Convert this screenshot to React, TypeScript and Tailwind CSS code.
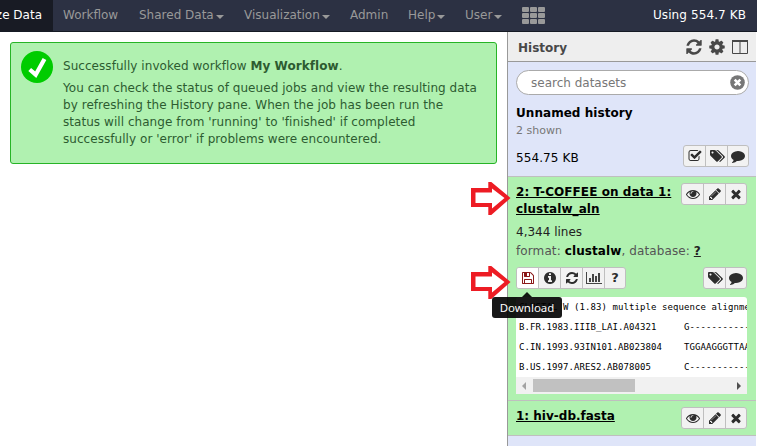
import type { ReactNode } from "react";

const PATHS = {
  eye: "M1664 960q-152-236-381-353 61 104 61 225 0 185-131.5 316.5t-316.5 131.5-316.5-131.5-131.5-316.5q0-121 61-225-229 117-381 353 133 205 333.5 326.5t434.5 121.5 434.5-121.5 333.5-326.5zm-720-384q0-20-14-34t-34-14q-125 0-214.5 89.5t-89.5 214.5q0 20 14 34t34 14 34-14 14-34q0-86 61-147t147-61q20 0 34-14t14-34zm848 384q0 34-20 69-140 230-376.5 368.5t-499.5 138.5-499.5-139-376.5-368q-20-35-20-69t20-69q140-229 376.5-368t499.5-139 499.5 139 376.5 368q20 35 20 69z",
  pencil: "M491 1536l91-91-235-235-91 91v107h128v128h107zm523-928q0-22-22-22-10 0-17 7l-542 542q-7 7-7 17 0 22 22 22 10 0 17-7l542-542q7-7 7-17zm-54-192l416 416-832 832h-416v-416zm683 96q0 53-37 90l-166 166-416-416 166-165q36-38 90-38 53 0 91 38l235 234q37 39 37 91z",
  times: "M1490 1322q0 40-28 68l-136 136q-28 28-68 28t-68-28l-294-294-294 294q-28 28-68 28t-68-28l-136-136q-28-28-28-68t28-68l294-294-294-294q-28-28-28-68t28-68l136-136q28-28 68-28t68 28l294 294 294-294q28-28 68-28t68 28l136 136q28 28 28 68t-28 68l-294 294 294 294q28 28 28 68z",
  refresh: "M1639 1056q0 5-1 7-64 268-268 434.5t-478 166.5q-146 0-282.5-55t-243.5-157l-129 129q-19 19-45 19t-45-19-19-45v-448q0-26 19-45t45-19h448q26 0 45 19t19 45-19 45l-137 137q71 66 161 102t187 36q134 0 250-65t186-179q11-17 53-117 8-23 30-23h192q13 0 22.5 9.5t9.5 22.5zm25-800v448q0 26-19 45t-45 19h-448q-26 0-45-19t-19-45 19-45l138-138q-148-137-349-137-134 0-250 65t-186 179q-11 17-53 117-8 23-30 23h-199q-13 0-22.5-9.5t-9.5-22.5v-7q65-268 270-434.5t480-166.5q146 0 284 55.5t245 156.5l130-129q19-19 45-19t45 19 19 45z",
  cog: "M1152 896q0-106-75-181t-181-75-181 75-75 181 75 181 181 75 181-75 75-181zm512-109v222q0 12-8 23t-20 13l-185 28q-19 54-39 91 35 50 107 138 10 12 10 25t-9 23q-27 37-99 108t-94 71q-12 0-26-9l-138-108q-44 23-91 38-16 136-29 186-7 28-36 28h-222q-14 0-24.5-8.5t-11.5-21.5l-28-184q-49-16-90-37l-141 107q-10 9-25 9-14 0-25-11-126-114-165-168-7-10-7-23 0-12 8-23 15-21 51-66.5t54-70.5q-27-50-41-99l-183-27q-13-2-21-12.5t-8-23.5v-222q0-12 8-23t19-13l186-28q14-46 39-92-40-57-107-138-10-12-10-24 0-10 9-23 26-36 98.5-107.5t94.5-71.5q13 0 26 10l138 107q44-23 91-38 16-136 29-186 7-28 36-28h222q14 0 24.5 8.5t11.5 21.5l28 184q49 16 90 37l142-107q9-9 24-9 13 0 25 10 129 119 165 170 7 8 7 22 0 12-8 23-15 21-51 66.5t-54 70.5q26 50 41 98l183 28q13 2 21 12.5t8 23.5z",
  comment: "M1792 896q0 174-120 321.5t-326 233-450 85.5q-70 0-145-8-198 175-460 242-49 14-114 22-17 2-30.5-9t-17.5-29v-1q-3-4-.5-12t2-10 4.5-9.5l6-9 7-8.5 8-9q7-8 31-34.5t34.5-38 31-39.5 32.5-51 27-59 26-76q-157-89-247.5-220t-90.5-281q0-130 71-248.5t191-204.5 286-136.5 348-50.5q244 0 450 85.5t326 233 120 321.5z",
  info: "M1152 1376v-160q0-14-9-23t-23-9h-96v-512q0-14-9-23t-23-9h-320q-14 0-23 9t-9 23v160q0 14 9 23t23 9h96v320h-96q-14 0-23 9t-9 23v160q0 14 9 23t23 9h448q14 0 23-9t9-23zm-128-896v-160q0-14-9-23t-23-9h-192q-14 0-23 9t-9 23v160q0 14 9 23t23 9h192q14 0 23-9t9-23zm640 416q0 209-103 385.5t-279.5 279.5-385.5 103-385.5-103-279.5-279.5-103-385.5 103-385.5 279.5-279.5 385.5-103 385.5 103 279.5 279.5 103 385.5z",
  tags: "M576 448q0-53-37.5-90.5t-90.5-37.5-90.5 37.5-37.5 90.5 37.5 90.5 90.5 37.5 90.5-37.5 37.5-90.5zm1067 576q0 53-37 90l-491 492q-39 37-91 37-53 0-90-37l-715-716q-38-37-64.5-101t-26.5-117v-416q0-52 38-90t90-38h416q53 0 117 26.5t102 64.5l715 714q37 39 37 91zm384 0q0 53-37 90l-491 492q-39 37-91 37-36 0-59-14t-53-45l470-470q37-37 37-90 0-52-37-91l-715-714q-38-38-102-64.5t-117-26.5h224q53 0 117 26.5t102 64.5l715 714q37 39 37 91z",
  save: "M512 1536h768v-384h-768v384zm896 0h128v-896q0-14-10-38.5t-20-34.5l-281-281q-10-10-34-20t-39-10v416q0 40-28 68t-68 28h-576q-40 0-68-28t-28-68v-416h-128v1280h128v-416q0-40 28-68t68-28h832q40 0 68 28t28 68v416zm-384-928v-320q0-13-9.5-22.5t-22.5-9.5h-192q-13 0-22.5 9.5t-9.5 22.5v320q0 13 9.5 22.5t22.5 9.5h192q13 0 22.5-9.5t9.5-22.5zm640 32v928q0 40-28 68t-68 28h-1344q-40 0-68-28t-28-68v-1344q0-40 28-68t68-28h928q40 0 88 20t76 48l280 280q28 28 48 76t20 88z",
  chart: "M640 896v512h-256v-512h256zm384-512v1024h-256v-1024h256zm1024 1152v128h-2048v-1536h128v1408h1920zm-640-896v768h-256v-768h256zm384-384v1152h-256v-1152h256z",
  check: "M1472 930v318q0 119-84.5 203.5t-203.5 84.5h-832q-119 0-203.5-84.5t-84.5-203.5v-832q0-119 84.5-203.5t203.5-84.5h832q63 0 117 25 15 7 18 23 3 17-9 29l-49 49q-10 10-23 10-3 0-9-2-23-6-45-6h-832q-66 0-113 47t-47 113v832q0 66 47 113t113 47h832q66 0 113-47t47-113v-254q0-13 9-22l64-64q10-10 23-10 6 0 12 3 20 8 20 29zm231-489l-814 814q-24 24-57 24t-57-24l-430-430q-24-24-24-57t24-57l110-110q24-24 57-24t57 24l263 263 647-647q24-24 57-24t57 24l110 110q24 24 24 57t-24 57z",
};

type IconName = keyof typeof PATHS;

function Icon({ name, className = "h-[14px]" }: { name: IconName; className?: string }) {
  const wide = name === "tags" || name === "chart";
  return (
    <svg viewBox={wide ? "0 0 2048 1792" : "0 0 1792 1792"} className={`shrink-0 fill-current ${className}`}>
      <path d={PATHS[name]} />
    </svg>
  );
}

function Buttons({ children }: { children: ReactNode }) {
  return (
    <div className="flex h-[22px] shrink-0 divide-x divide-[#bfbfbf] overflow-hidden rounded-[3px] border border-[#bfbfbf] bg-[#f2f2f2] text-[#2d2d2d]">
      {children}
    </div>
  );
}

function Btn({ children, active = false }: { children: ReactNode; active?: boolean }) {
  return (
    <button className={`flex w-[22px] items-center justify-center last:w-[20px] ${active ? "bg-white text-[#8b1a1a]" : ""}`}>
      {children}
    </button>
  );
}

function Caret() {
  return <span className="mt-[2px] ml-[2px] self-center border-x-4 border-t-4 border-x-transparent border-t-[#999]" />;
}

function Arrow({ className }: { className: string }) {
  return (
    <svg viewBox="0 0 42 34" className={`absolute h-[34px] w-[42px] ${className}`}>
      <path d="M1 7h17.3V1h3L40.5 17 21.3 34h-3v-8H1z" fill="#ed1c24" />
      <path d="M5.5 11.5H22v-4L34.5 17 22 27.5V22H5.5z" fill="#fff" />
    </svg>
  );
}

function ItemActions() {
  return (
    <Buttons>
      <Btn><Icon name="eye" /></Btn>
      <Btn><Icon name="pencil" /></Btn>
      <Btn><Icon name="times" /></Btn>
    </Buttons>
  );
}

const SEQUENCES = [
  "CLUSTAL W (1.83) multiple sequence alignment",
  "B.FR.1983.IIIB_LAI.A04321     G---------------",
  "C.IN.1993.93IN101.AB023804    TGGAAGGGTTAATTTA",
  "B.US.1997.ARES2.AB078005      C---------------",
];

export default function App() {
  return (
    <div className="relative flex h-[446px] w-[757px] flex-col overflow-hidden bg-white font-['DejaVu_Sans',sans-serif] text-[12px]">
      <nav className="flex h-8 shrink-0 border-b border-[#151a24] bg-[#2c3143] leading-[30px] whitespace-nowrap text-[#999]">
        <div className="flex w-[53px] justify-end bg-[#181b24] pr-[11px] text-white">
          <span>Analyze Data</span>
        </div>
        <div className="w-[76px] pl-[10px]">Workflow</div>
        <div className="flex w-[105px] pl-[10px]"><span>Shared Data</span><Caret /></div>
        <div className="flex w-[106px] pl-[10px]"><span>Visualization</span><Caret /></div>
        <div className="w-[58px] pl-[10px]">Admin</div>
        <div className="flex w-[57px] pl-[10px]"><span>Help</span><Caret /></div>
        <div className="flex w-[57px] pl-[10px]"><span>User</span><Caret /></div>
        <div className="ml-[10px] grid h-[17px] w-[23px] grid-cols-3 gap-x-px gap-y-px self-center">
          {Array.from({ length: 9 }, (_, i) => <i key={i} className="rounded-[1px] bg-[#999]" />)}
        </div>
        <div className="ml-auto pr-[11px] tracking-[0.1px] text-white">Using 554.7 KB</div>
      </nav>

      <div className="flex min-h-0 flex-1">
        <main className="w-[507px] p-[10px]">
          <div className="flex h-[122px] w-[487px] rounded-[3px] border border-[#26b426] bg-[#b0f1b0] pt-[8px] pl-[10px] text-[#2d5c30]">
            <svg viewBox="0 0 32 32" className="size-8 shrink-0">
              <circle cx="16" cy="16" r="16" fill="#00cc00" />
              <path d="M8.7 18.5l6 5.2L23.5 8" fill="none" stroke="#fff" strokeWidth="4.2" />
            </svg>
            <div className="ml-[10px] pt-[7px] leading-[17px] tracking-[0.05px] whitespace-nowrap">
              <p className="mb-[5px]">Successfully invoked workflow <b>My Workflow</b>.</p>
              <p>You can check the status of queued jobs and view the resulting data</p>
              <p>by refreshing the History pane. When the job has been run the</p>
              <p>status will change from 'running' to 'finished' if completed</p>
              <p>successfully or 'error' if problems were encountered.</p>
            </div>
          </div>
        </main>

        <aside className="flex w-[249px] flex-col border-l border-[#999] bg-[#dfe5f9] whitespace-nowrap">
          <header className="flex h-[30px] shrink-0 items-center border-b border-[#999] bg-[#eee] pr-[8px] pl-[10px] text-[#484848]">
            <b className="mt-[3px] flex-1 leading-4">History</b>
            <Icon name="refresh" className="size-[18px]" />
            <Icon name="cog" className="ml-[5px] size-[18px]" />
            <svg viewBox="0 0 16 14" className="ml-[6px] h-[14px] w-4" fill="none" stroke="currentColor">
              <path d="M.5 1v12.5h15V1M8 1v12" />
              <path d="M0 1h16" strokeWidth="2" />
            </svg>
          </header>

          <section className="h-[115px] shrink-0 border-b border-[#bfbfbf] pt-[8px] pr-[7px] pl-[8px]">
            <div className="flex h-[25px] items-center justify-between rounded-full border border-[#aaa] bg-white pr-[3px] pl-[14px] text-[#777]">
              <span>search datasets</span>
              <svg viewBox="0 0 16 16" className="size-[15px]">
                <circle cx="8" cy="8" r="7.8" fill="#777" />
                <path d="M5 5l6 6M11 5l-6 6" stroke="#fff" strokeWidth="2.8" />
              </svg>
            </div>
            <div className="mt-[10px] leading-4 font-bold tracking-[0.05px] text-black">Unnamed history</div>
            <div className="mt-[2px] text-[11px] leading-4 text-[#777]">2 shown</div>
            <div className="mt-[6px] flex justify-between text-black">
              <span className="mt-[5px] leading-4 tracking-[0.1px]">554.75 KB</span>
              <Buttons>
                <Btn><Icon name="check" /></Btn>
                <Btn><Icon name="tags" /></Btn>
                <Btn><Icon name="comment" /></Btn>
              </Buttons>
            </div>
          </section>

          <section className="h-[224px] shrink-0 border-b border-[#bfbfbf] bg-[#b0f1b0] pt-[6px] pr-[9px] pl-[8px]">
            <div className="flex justify-between">
              <div className="pt-px font-bold leading-[17px] tracking-[0.08px] text-black underline">2: T-COFFEE on data 1:<br />clustalw_aln</div>
              <ItemActions />
            </div>
            <div className="mt-[6px] leading-4 text-[#222]">4,344 lines</div>
            <div className="mt-[3px] leading-4 tracking-[0.1px] text-[#555]">format: <b className="text-black">clustalw</b>, database: <b className="text-[#222] underline">?</b></div>
            <div className="mt-[8px] flex justify-between">
              <Buttons>
                <Btn active><Icon name="save" /></Btn>
                <Btn><Icon name="info" /></Btn>
                <Btn><Icon name="refresh" /></Btn>
                <Btn><Icon name="chart" className="h-[14px] text-[#444]" /></Btn>
                <Btn><b className="text-[13px]">?</b></Btn>
              </Buttons>
              <Buttons>
                <Btn><Icon name="tags" /></Btn>
                <Btn><Icon name="comment" /></Btn>
              </Buttons>
            </div>
            <div className="mt-[8px] h-[97px] w-[231px] overflow-hidden rounded-t-[3px] bg-white">
              <pre className="h-[80px] overflow-hidden pl-[3px] font-['DejaVu_Sans_Mono',monospace] text-[9px] leading-5 tracking-[0.08px] text-black">{SEQUENCES.join("\n")}</pre>
              <div className="flex h-[17px] items-center bg-[#f1f1f1]">
                <span className="ml-[6px] border-y-4 border-r-4 border-y-transparent border-r-[#a3a3a3]" />
                <span className="ml-[7px] h-[13px] w-[102px] bg-[#c1c1c1]" />
                <span className="mr-[6px] ml-auto border-y-4 border-l-4 border-y-transparent border-l-[#505050]" />
              </div>
            </div>
          </section>

          <section className="flex h-[35px] shrink-0 justify-between border-b border-[#bfbfbf] bg-[#b0f1b0] pt-[6px] pr-[9px] pl-[8px]">
            <b className="pt-px leading-[17px] text-black underline">1: hiv-db.fasta</b>
            <ItemActions />
          </section>
        </aside>
      </div>

      <Arrow className="top-[181px] left-[470px]" />
      <Arrow className="top-[265px] left-[470px]" />
      <div className="absolute top-[292px] left-[492px] flex w-[70px] flex-col items-center opacity-90">
        <span className="border-x-[5px] border-b-[5px] border-x-transparent border-b-black" />
        <span className="h-[21px] w-full rounded-[3px] bg-black text-center font-['Noto_Sans',sans-serif] text-[11.5px] leading-[21px] text-white">Download</span>
      </div>
    </div>
  );
}
